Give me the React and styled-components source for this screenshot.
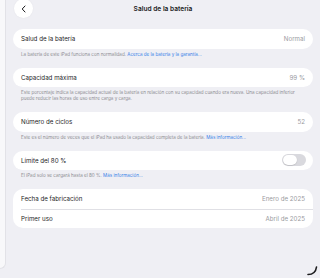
import React, { useState } from "react";
import styled, { createGlobalStyle } from "styled-components";

const GlobalStyle = createGlobalStyle`
  html, body {
    margin: 0;
    padding: 0;
    background: #efeff4;
    font-family: Inter, "Noto Sans", sans-serif;
    -webkit-font-smoothing: antialiased;
  }
`;

const Screen = styled.div`
  position: relative;
  display: flex;
  width: 320px;
  height: 278px;
  overflow: hidden;
  background: #efeff4;
`;

const Sidebar = styled.aside`
  width: 5px;
  height: 268px;
  background: #f8f8fa;
  border-right: 1px solid #e2e2e7;
  border-bottom: 1px solid #e2e2e7;
  border-bottom-right-radius: 8px;
`;

const Main = styled.main`
  flex: 1;
  display: flex;
  flex-direction: column;
  padding: 0 7px 0 7px;
`;

const Header = styled.header`
  display: grid;
  grid-template-columns: 30px 1fr 30px;
  align-items: center;
  height: 18px;
  margin-top: -1px;
  margin-bottom: 12px;
`;

const BackButton = styled.button`
  width: 19px;
  height: 19px;
  margin-left: 1px;
  border: none;
  border-radius: 50%;
  background: #ffffff;
  display: flex;
  align-items: center;
  justify-content: center;
  padding: 0;
  box-shadow: 0 0 2px rgba(0, 0, 0, 0.05);
`;

const Title = styled.h1`
  margin: 0;
  text-align: center;
  font-size: 6.6px;
  font-weight: 600;
  color: #1c1c1e;
`;

const Section = styled.section`
  display: flex;
  flex-direction: column;
  margin-bottom: 10px;
`;

const Card = styled.div`
  background: #ffffff;
  border-radius: 10px;
  overflow: hidden;
`;

const Row = styled.div`
  display: flex;
  align-items: center;
  justify-content: space-between;
  height: 19.5px;
  padding: 0 8px;
  position: relative;

  & + &::before {
    content: "";
    position: absolute;
    top: 0;
    left: 8px;
    right: 0;
    height: 0.5px;
    background: #e0e0e5;
  }
`;

const Label = styled.span`
  font-size: 6.2px;
  color: #1c1c1e;
`;

const Value = styled.span`
  font-size: 6.2px;
  color: #9a9aa0;
`;

const Footnote = styled.p`
  margin: 0;
  padding: 3px 8px 0;
  font-size: 4.55px;
  line-height: 6px;
  color: #8e8e93;
`;

const FootLink = styled.a`
  color: #3a82e8;
  text-decoration: none;
`;

const Track = styled.button`
  width: 24px;
  height: 12px;
  padding: 1px;
  border: none;
  border-radius: 6px;
  background: ${(p) => (p.$on ? "#34c759" : "#d9d9de")};
  display: flex;
  justify-content: ${(p) => (p.$on ? "flex-end" : "flex-start")};
  margin-right: -1px;
`;

const Knob = styled.span`
  width: 14px;
  height: 10px;
  border-radius: 5px;
  background: #ffffff;
  box-shadow: 0 0.5px 1px rgba(0, 0, 0, 0.2);
`;

const Corner = styled.svg`
  position: absolute;
  right: 2px;
  bottom: 2px;
`;

const Toggle = () => {
  const [on, setOn] = useState(false);
  return (
    <Track $on={on} onClick={() => setOn(!on)}>
      <Knob />
    </Track>
  );
};

const App = () => (
  <>
    <GlobalStyle />
    <Screen>
      <Sidebar />
      <Main>
        <Header>
          <BackButton aria-label="Atrás">
            <svg width="8" height="8" viewBox="0 0 8 8">
              <path d="M5 1 L2.2 4 L5 7" fill="none" stroke="#1c1c1e" strokeWidth="1" strokeLinecap="round" strokeLinejoin="round" />
            </svg>
          </BackButton>
          <Title>Salud de la batería</Title>
          <span />
        </Header>

        <Section>
          <Card>
            <Row>
              <Label>Salud de la batería</Label>
              <Value>Normal</Value>
            </Row>
          </Card>
          <Footnote>
            La batería de este iPad funciona con normalidad.{" "}
            <FootLink>Acerca de la batería y la garantía...</FootLink>
          </Footnote>
        </Section>

        <Section>
          <Card>
            <Row>
              <Label>Capacidad máxima</Label>
              <Value>99 %</Value>
            </Row>
          </Card>
          <Footnote>
            Este porcentaje indica la capacidad actual de la batería en relación con su capacidad cuando era nueva. Una capacidad inferior puede reducir las horas de uso entre carga y carga.
          </Footnote>
        </Section>

        <Section>
          <Card>
            <Row>
              <Label>Número de ciclos</Label>
              <Value>52</Value>
            </Row>
          </Card>
          <Footnote>
            Este es el número de veces que el iPad ha usado la capacidad completa de la batería.{" "}
            <FootLink>Más información...</FootLink>
          </Footnote>
        </Section>

        <Section>
          <Card>
            <Row>
              <Label>Límite del 80 %</Label>
              <Toggle />
            </Row>
          </Card>
          <Footnote>
            El iPad solo se cargará hasta el 80 %. <FootLink>Más información...</FootLink>
          </Footnote>
        </Section>

        <Section>
          <Card>
            <Row>
              <Label>Fecha de fabricación</Label>
              <Value>Enero de 2025</Value>
            </Row>
            <Row>
              <Label>Primer uso</Label>
              <Value>Abril de 2025</Value>
            </Row>
          </Card>
        </Section>
      </Main>
      <Corner width="12" height="12" viewBox="0 0 12 12">
        <path d="M2 10.5 Q9.5 10.5 10.5 3" fill="none" stroke="#1c1c1e" strokeWidth="1.6" strokeLinecap="round" />
      </Corner>
    </Screen>
  </>
);

export default App;
